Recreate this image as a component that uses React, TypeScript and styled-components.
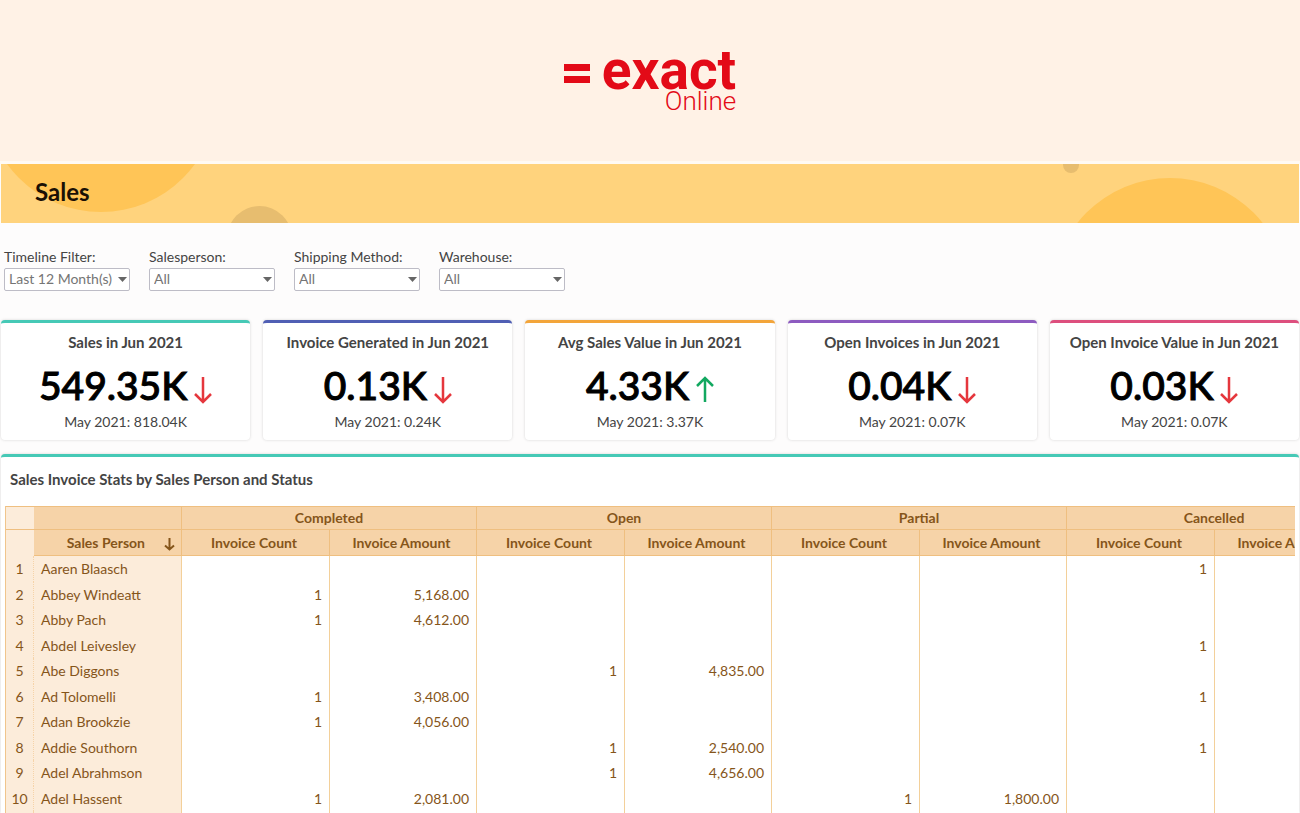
import React from "react";
import styled, { createGlobalStyle } from "styled-components";

const GlobalStyle = createGlobalStyle`
  *, *::before, *::after { box-sizing: border-box; }
  body { margin: 0; background: #fdfcfc; font-family: Lato, "Open Sans", sans-serif; color: #444; }
  h1, h2, h3, p { margin: 0; }
`;

const Page = styled.div`
  min-height: 100vh;
  display: flex;
  flex-direction: column;
  overflow-x: hidden;
`;

const Hero = styled.header`
  height: 164px;
  padding-top: 52px;
  display: flex;
  justify-content: center;
  align-items: flex-start;
  background: #fff2e6;
  border-bottom: 3px solid #fffaf4;
`;

const Logo = styled.div`
  display: flex;
  gap: 12px;
  color: #e30a17;
  font-family: Roboto, sans-serif;
`;

const LogoMark = styled.svg`
  display: block;
  margin-top: 12px;
`;

const Wordmark = styled.div`
  display: flex;
  flex-direction: column;
  align-items: flex-end;
`;

const BrandName = styled.span`
  font-size: 55px;
  font-weight: 700;
  line-height: 36px;
`;

const BrandSuffix = styled.span`
  font-size: 26px;
  font-weight: 300;
  line-height: 26px;
`;

const Banner = styled.div`
  position: relative;
  overflow: hidden;
  height: 59px;
  margin: 0 1px;
  padding: 14px 34px 0;
  background: #ffd37d;
`;

const Bubble = styled.span<{ $size: number; $top: number; $left?: number; $right?: number; $muted?: boolean }>`
  position: absolute;
  width: ${(p) => p.$size}px;
  height: ${(p) => p.$size}px;
  top: ${(p) => p.$top}px;
  ${(p) => (p.$left !== undefined ? `left: ${p.$left}px;` : "")}
  ${(p) => (p.$right !== undefined ? `right: ${p.$right}px;` : "")}
  border-radius: 50%;
  background: ${(p) => (p.$muted ? "#e7bd6f" : "#ffc557")};
`;

const BannerTitle = styled.h1`
  position: relative;
  font-size: 24px;
  line-height: 28px;
  font-weight: 700;
  color: #1a1005;
`;

const Filters = styled.form`
  display: flex;
  gap: 19px;
  padding: 24px 4px 29px;
`;

const Filter = styled.label`
  width: 126px;
  font-size: 14px;
  line-height: 20px;
  color: #444;
  white-space: nowrap;
`;

const SelectBox = styled.span`
  position: relative;
  display: block;
  margin-top: 1px;
`;

const Select = styled.select`
  display: block;
  appearance: none;
  width: 100%;
  height: 23px;
  padding: 0 4px 1px;
  border: 1px solid #bdbcc6;
  border-radius: 2px;
  background: #fff;
  color: #757575;
  font: 14px/20px Lato, sans-serif;
`;

const Caret = styled.svg`
  position: absolute;
  right: 3px;
  top: 9px;
  pointer-events: none;
`;

const Cards = styled.section`
  display: grid;
  grid-template-columns: repeat(5, 1fr);
  gap: 13px;
  padding: 0 1px;
`;

const Card = styled.article<{ $accent: string }>`
  height: 120px;
  display: flex;
  flex-direction: column;
  align-items: center;
  padding-top: 9px;
  background: #fff;
  border-top: 3px solid ${(p) => p.$accent};
  border-radius: 4px;
  box-shadow: 0 0 3px rgba(0, 0, 0, 0.16);
  white-space: nowrap;
`;

const CardTitle = styled.h2`
  font-size: 15px;
  line-height: 20px;
  font-weight: 700;
`;

const Figure = styled.p`
  display: flex;
  align-items: flex-start;
  gap: 7px;
  margin-top: 8px;
  font-size: 39px;
  line-height: 50px;
  font-weight: 500;
  color: #000;
  -webkit-text-stroke: 1px #000;
`;

const Trend = styled.svg`
  margin-top: 16px;
`;

const Previous = styled.p`
  margin-top: 3px;
  font-size: 14px;
  line-height: 18px;
`;

const Report = styled.section`
  flex: 1;
  margin: 14px 1px 0;
  padding: 12px 4px 0;
  background: #fff;
  border-top: 3px solid #46c9b6;
  border-radius: 4px 4px 0 0;
  box-shadow: 0 0 3px rgba(0, 0, 0, 0.16);
`;

const ReportTitle = styled.h2`
  padding: 0 5px;
  font-size: 15px;
  line-height: 20px;
  font-weight: 700;
`;

const TableArea = styled.div`
  margin-top: 17px;
  overflow: hidden;
`;

const Table = styled.table`
  table-layout: fixed;
  width: 1356px;
  border-collapse: separate;
  border-spacing: 0;
  border-left: 1px solid #f0c58c;
  color: #85551a;
  font-size: 14px;
  line-height: 18px;
`;

const Head = styled.th`
  height: 26px;
  padding: 0 3px 0 0;
  background: #f6d3a8;
  border-right: 1px solid #efbf80;
  border-bottom: 1px solid #efbf80;
  font-weight: 700;
  white-space: nowrap;
`;

const TopHead = styled(Head)`
  height: 24px;
  padding: 0;
  border-top: 1px solid #efbf80;
`;

const Corner = styled(TopHead)`
  background: #fcecda;
  border-right: 0;
`;

const CornerLower = styled(Head)`
  background: #fcecda;
  border: 0;
`;

const SortButton = styled.button`
  display: flex;
  width: 100%;
  align-items: center;
  justify-content: flex-end;
  gap: 19px;
  padding: 0 3px 0 0;
  border: 0;
  background: none;
  color: inherit;
  font: inherit;
`;

const SortIcon = styled.svg`
  margin-top: 4px;
`;

const Row = styled.tr`
  height: 26px;
  &:nth-child(even) { height: 25px; }
`;

const EndRow = styled.tr`
  height: 2px;
`;

const RowNumber = styled.td`
  padding: 0;
  text-align: center;
  background: #fcecda;
  border-right: 1px dotted #f6d3a8;
`;

const Person = styled.th`
  padding: 0 7px;
  text-align: left;
  font-weight: 400;
  background: #fcecda;
  border-right: 1px solid #f3d09a;
`;

const Amount = styled.td`
  padding: 0 7px;
  text-align: right;
  border-right: 1px solid #f3d09a;
`;

const Arrow = ({ up }: { up?: boolean }) => (
  <Trend width="18" height="28" viewBox="0 0 18 28" fill="none" stroke={up ? "#12a860" : "#e5373d"} strokeWidth="2.500" aria-hidden="true">
    {up ? <path d="M9 26V2M1 10L9 2l8 8" /> : <path d="M9 1v25M1 18L9 26l8-8" />}
  </Trend>
);

const filters = [
  ["Timeline Filter:", "Last 12 Month(s)"],
  ["Salesperson:", "All"],
  ["Shipping Method:", "All"],
  ["Warehouse:", "All"],
];

const cards = [
  { title: "Sales in Jun 2021", value: "549.35K", previous: "May 2021: 818.04K", accent: "#46c9b6" },
  { title: "Invoice Generated in Jun 2021", value: "0.13K", previous: "May 2021: 0.24K", accent: "#505fb4" },
  { title: "Avg Sales Value in Jun 2021", value: "4.33K", previous: "May 2021: 3.37K", accent: "#f3a53a", up: true },
  { title: "Open Invoices in Jun 2021", value: "0.04K", previous: "May 2021: 0.07K", accent: "#8d5bc0" },
  { title: "Open Invoice Value in Jun 2021", value: "0.03K", previous: "May 2021: 0.07K", accent: "#dd4f7e" },
];

const groups = ["Completed", "Open", "Partial", "Cancelled"];

const rows: [string, string[]][] = [
  ["Aaren Blaasch", ["", "", "", "", "", "", "1", ""]],
  ["Abbey Windeatt", ["1", "5,168.00", "", "", "", "", "", ""]],
  ["Abby Pach", ["1", "4,612.00", "", "", "", "", "", ""]],
  ["Abdel Leivesley", ["", "", "", "", "", "", "1", ""]],
  ["Abe Diggons", ["", "", "1", "4,835.00", "", "", "", ""]],
  ["Ad Tolomelli", ["1", "3,408.00", "", "", "", "", "1", ""]],
  ["Adan Brookzie", ["1", "4,056.00", "", "", "", "", "", ""]],
  ["Addie Southorn", ["", "", "1", "2,540.00", "", "", "1", ""]],
  ["Adel Abrahmson", ["", "", "1", "4,656.00", "", "", "", ""]],
  ["Adel Hassent", ["1", "2,081.00", "", "", "1", "1,800.00", "", ""]],
];

export default function App() {
  return (
    <Page>
      <GlobalStyle />
      <Hero>
        <Logo>
          <LogoMark width="26" height="20" viewBox="0 0 26 20" fill="currentColor" aria-hidden="true">
            <rect x="0" y="0" width="26" height="7" />
            <rect x="0" y="12" width="26" height="7" />
          </LogoMark>
          <Wordmark>
            <BrandName>exact</BrandName>
            <BrandSuffix>Online</BrandSuffix>
          </Wordmark>
        </Logo>
      </Hero>
      <Banner>
        <Bubble $size={232} $top={-184} $left={-16} />
        <Bubble $size={65} $top={42} $left={226} $muted />
        <Bubble $size={236} $top={14} $right={11} />
        <Bubble $size={16} $top={-7} $right={220} $muted />
        <BannerTitle>Sales</BannerTitle>
      </Banner>
      <Filters>
        {filters.map(([label, value]) => (
          <Filter key={label}>
            {label}
            <SelectBox>
              <Select defaultValue={value}>
                <option>{value}</option>
              </Select>
              <Caret width="9" height="5" viewBox="0 0 9 5" fill="#666" aria-hidden="true">
                <path d="M0 0h9L4.500 5z" />
              </Caret>
            </SelectBox>
          </Filter>
        ))}
      </Filters>
      <Cards>
        {cards.map((c) => (
          <Card key={c.title} $accent={c.accent}>
            <CardTitle>{c.title}</CardTitle>
            <Figure>
              {c.value}
              <Arrow up={c.up} />
            </Figure>
            <Previous>{c.previous}</Previous>
          </Card>
        ))}
      </Cards>
      <Report>
        <ReportTitle>Sales Invoice Stats by Sales Person and Status</ReportTitle>
        <TableArea>
          <Table>
            <colgroup>
              <col style={{ width: 28 }} />
              <col style={{ width: 148 }} />
              {groups.map((g) => (
                <React.Fragment key={g}>
                  <col style={{ width: 148 }} />
                  <col style={{ width: 147 }} />
                </React.Fragment>
              ))}
            </colgroup>
            <thead>
              <tr>
                <Corner />
                <TopHead />
                {groups.map((g) => (
                  <TopHead key={g} colSpan={2} scope="colgroup">{g}</TopHead>
                ))}
              </tr>
              <tr>
                <CornerLower />
                <Head scope="col">
                  <SortButton type="button">
                    Sales Person
                    <SortIcon width="11" height="13" viewBox="0 0 11 13" fill="none" stroke="currentColor" strokeWidth="2" aria-hidden="true">
                      <path d="M5.500 0v11M1 7.500l4.500 4 4.500-4" />
                    </SortIcon>
                  </SortButton>
                </Head>
                {groups.map((g) => (
                  <React.Fragment key={g}>
                    <Head scope="col">Invoice Count</Head>
                    <Head scope="col">Invoice Amount</Head>
                  </React.Fragment>
                ))}
              </tr>
            </thead>
            <tbody>
              {rows.map(([name, cells], i) => (
                <Row key={name}>
                  <RowNumber>{i + 1}</RowNumber>
                  <Person scope="row">{name}</Person>
                  {cells.map((cell, j) => (
                    <Amount key={j}>{cell}</Amount>
                  ))}
                </Row>
              ))}
            </tbody>
            <tfoot aria-hidden="true">
              <EndRow>
                <RowNumber />
                <Person as="td" />
                {rows[0][1].map((_, j) => (
                  <Amount key={j} />
                ))}
              </EndRow>
            </tfoot>
          </Table>
        </TableArea>
      </Report>
    </Page>
  );
}
